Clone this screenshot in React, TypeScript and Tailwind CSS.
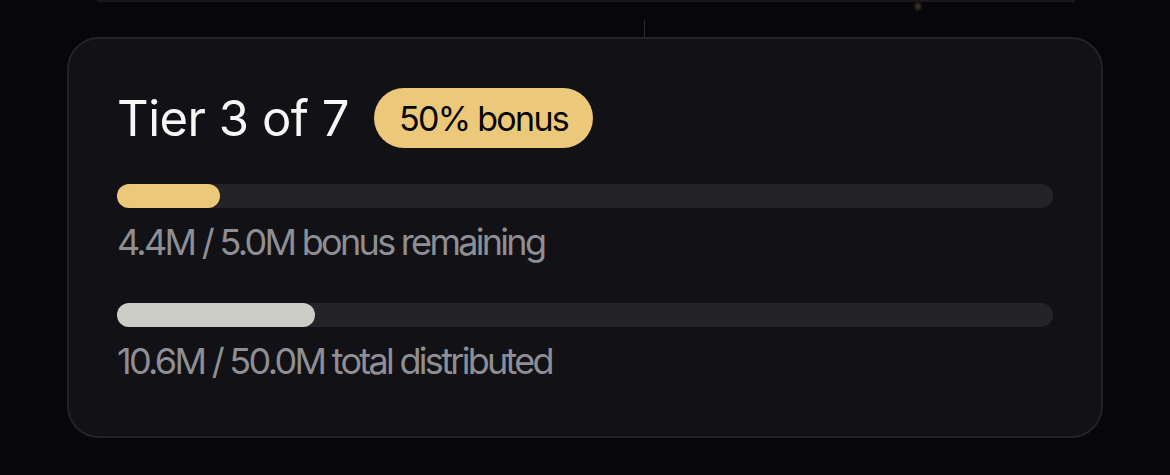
export default function App() {
  const bonusPct = 11
  const totalPct = 21.2

  return (
    <div className="min-h-screen w-full bg-[#07070b] font-['Inter','Liberation_Sans',sans-serif]">
      <div className="relative h-[37px]">
        <div className="ml-[97px] h-[2px] w-[978px] bg-[#17171c]" />
        <div className="absolute left-[644px] top-[20px] h-[17px] w-px bg-[#2a2a30]" />
        <div className="absolute left-[915px] top-[3px] h-[7px] w-[6px] rounded-full bg-[#3a3220] blur-[1px]" />
      </div>

      <div className="ml-[67px] w-[1036px] h-[401px] rounded-[32px] border-2 border-[#222228] bg-[#111116] px-[48px] pt-[49px]">
        <div className="flex items-center h-[60px]">
          <h1 className="text-[49px] leading-none text-[#f7f7f5] font-normal tracking-[-0.01em]">Tier 3 of 7</h1>
          <span className="ml-[25px] h-[60px] flex items-center rounded-full bg-[#ecc97a] px-[25px] text-[34px] text-[#050506] tracking-[-0.05em]">
            50% bonus
          </span>
        </div>

        <div className="mt-[36px] h-[24px] w-full rounded-full bg-[#232328]">
          <div className="h-full rounded-full bg-[#ecc97a]" style={{ width: `${bonusPct}%` }} />
        </div>
        <p className="mt-[16px] text-[36px] leading-none text-[#8e8e93] tracking-[-0.075em]">
          4.4M / 5.0M bonus remaining
        </p>

        <div className="mt-[43px] h-[24px] w-full rounded-full bg-[#232328]">
          <div className="h-full rounded-full bg-[#cdcdc8]" style={{ width: `${totalPct}%` }} />
        </div>
        <p className="mt-[16px] text-[36px] leading-none text-[#8e8e93] tracking-[-0.075em]">
          10.6M / 50.0M total distributed
        </p>
      </div>
    </div>
  )
}
